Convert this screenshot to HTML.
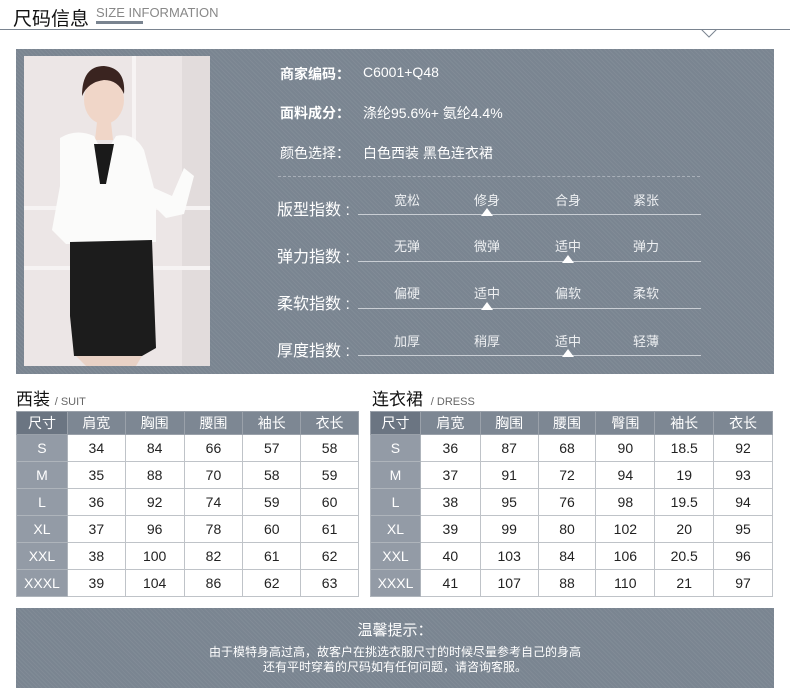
<!DOCTYPE html>
<html><head><meta charset="utf-8"><style>
*{margin:0;padding:0;box-sizing:border-box}
body{width:790px;height:693px;background:#fff;position:relative;overflow:hidden;font-family:"Liberation Sans","Noto Sans CJK SC",sans-serif;color:#222}
.a{position:absolute;white-space:nowrap}
.panel{background:#7a8591;background-image:repeating-linear-gradient(45deg,rgba(255,255,255,.05) 0 1px,transparent 1px 3px)}
.w{color:#fff}
.opt{position:absolute;font-size:13px;color:#eef0f2;transform:translateX(-50%)}
.ln{position:absolute;left:358px;width:343px;height:1px;background:#c9ced4}
.tri{position:absolute;width:0;height:0;border-left:6px solid transparent;border-right:6px solid transparent;border-bottom:8px solid #fff}
table{position:absolute;border-collapse:collapse;font-size:14px;text-align:center}
td{border:1px solid #bfc3c8;height:27px;padding:0;color:#222}
tr.h td{background:#7d8793;color:#fff;height:23px;border-color:#9aa1aa}
td.s{background:#939ba6;color:#fff;border-color:#aeb4bb}
tr.h td.s{background:#6b7582}
</style></head><body>
<div class="a" style="left:13px;top:4px;font-size:19px;color:#111">尺码信息</div>
<div class="a" style="left:96px;top:5px;font-size:13px;color:#888">SIZE INFORMATION</div>
<div class="a" style="left:96px;top:21px;width:47px;height:3px;background:#7a8490"></div>
<div class="a" style="left:0;top:29px;width:790px;height:1px;background:#7a8490"></div>
<svg class="a" style="left:700px;top:29px" width="18" height="10"><path d="M1 0 L9 8 L17 0" fill="none" stroke="#7a8490"/></svg>

<div class="a panel" style="left:16px;top:49px;width:758px;height:325px"></div>
<svg class="a" style="left:24px;top:56px" width="186" height="310" viewBox="0 0 186 310">
<rect width="186" height="310" fill="#ece6e6"/>
<rect x="108" y="0" width="4" height="310" fill="#f7f4f4"/>
<rect x="158" y="0" width="28" height="310" fill="#e2dcdc"/>
<rect x="0" y="150" width="186" height="4" fill="#f6f3f3"/>
<rect x="0" y="210" width="186" height="4" fill="#f6f3f3"/>
<ellipse cx="80" cy="44" rx="20" ry="24" fill="#f0d6c8"/>
<path d="M58 40 Q58 10 80 10 Q102 12 100 38 Q94 24 80 24 Q64 26 58 40Z" fill="#3a2420"/>
<path d="M73 66 L87 66 L89 84 L71 84Z" fill="#f0d6c8"/>
<path d="M36 82 Q52 72 70 80 L80 100 L92 80 Q110 76 120 94 L130 132 L148 140 L160 112 L170 120 L160 158 L142 162 L132 152 L132 186 L42 188 L28 174 L36 130 Z" fill="#fbfbfa"/>
<path d="M70 88 L90 88 L82 128 L76 128Z" fill="#1a1a1a"/>
<path d="M46 186 L128 184 L132 292 L118 300 L50 300 L46 260Z" fill="#1c1c1c"/>
<path d="M52 300 L62 310 L112 310 L118 300Z" fill="#e9d2c6"/>
</svg>

<div class="a w" style="left:280px;top:64px;font-size:14px;font-weight:bold">商家编码：</div>
<div class="a w" style="left:363px;top:64px;font-size:14px">C6001+Q48</div>
<div class="a w" style="left:280px;top:103px;font-size:14px;font-weight:bold">面料成分：</div>
<div class="a w" style="left:363px;top:103px;font-size:14px">涤纶95.6%+ 氨纶4.4%</div>
<div class="a w" style="left:280px;top:143px;font-size:14px">颜色选择：</div>
<div class="a w" style="left:363px;top:143px;font-size:14px">白色西装 黑色连衣裙</div>
<div class="a" style="left:278px;top:176px;width:422px;border-top:1px dashed #a8afb8"></div>

<div class="a w" style="left:277px;top:196px;font-size:16px">版型指数 :</div>
<div class="opt" style="left:407px;top:190px">宽松</div><div class="opt" style="left:487px;top:190px">修身</div><div class="opt" style="left:568px;top:190px">合身</div><div class="opt" style="left:646px;top:190px">紧张</div>
<div class="ln" style="top:214px"></div><div class="tri" style="left:481px;top:208px"></div>

<div class="a w" style="left:277px;top:243px;font-size:16px">弹力指数 :</div>
<div class="opt" style="left:407px;top:236px">无弹</div><div class="opt" style="left:487px;top:236px">微弹</div><div class="opt" style="left:568px;top:236px">适中</div><div class="opt" style="left:646px;top:236px">弹力</div>
<div class="ln" style="top:261px"></div><div class="tri" style="left:562px;top:255px"></div>

<div class="a w" style="left:277px;top:290px;font-size:16px">柔软指数 :</div>
<div class="opt" style="left:407px;top:283px">偏硬</div><div class="opt" style="left:487px;top:283px">适中</div><div class="opt" style="left:568px;top:283px">偏软</div><div class="opt" style="left:646px;top:283px">柔软</div>
<div class="ln" style="top:308px"></div><div class="tri" style="left:481px;top:302px"></div>

<div class="a w" style="left:277px;top:337px;font-size:16px">厚度指数 :</div>
<div class="opt" style="left:407px;top:331px">加厚</div><div class="opt" style="left:487px;top:331px">稍厚</div><div class="opt" style="left:568px;top:331px">适中</div><div class="opt" style="left:646px;top:331px">轻薄</div>
<div class="ln" style="top:355px"></div><div class="tri" style="left:562px;top:349px"></div>

<div class="a" style="left:16px;top:385px;font-size:17px;color:#111">西装 <span style="font-size:11px;color:#666">/ SUIT</span></div>
<div class="a" style="left:372px;top:385px;font-size:17px;color:#111">连衣裙 <span style="font-size:11px;color:#666">&nbsp;/ DRESS</span></div>

<table style="left:16px;top:411px;width:343px">
<colgroup><col style="width:51px"><col style="width:58px"><col style="width:59px"><col style="width:59px"><col style="width:58px"><col style="width:58px"></colgroup>
<tr class="h"><td class="s">尺寸</td><td>肩宽</td><td>胸围</td><td>腰围</td><td>袖长</td><td>衣长</td></tr>
<tr><td class="s">S</td><td>34</td><td>84</td><td>66</td><td>57</td><td>58</td></tr>
<tr><td class="s">M</td><td>35</td><td>88</td><td>70</td><td>58</td><td>59</td></tr>
<tr><td class="s">L</td><td>36</td><td>92</td><td>74</td><td>59</td><td>60</td></tr>
<tr><td class="s">XL</td><td>37</td><td>96</td><td>78</td><td>60</td><td>61</td></tr>
<tr><td class="s">XXL</td><td>38</td><td>100</td><td>82</td><td>61</td><td>62</td></tr>
<tr><td class="s">XXXL</td><td>39</td><td>104</td><td>86</td><td>62</td><td>63</td></tr>
</table>

<table style="left:370px;top:411px;width:403px">
<colgroup><col style="width:50px"><col style="width:60px"><col style="width:58px"><col style="width:58px"><col style="width:59px"><col style="width:59px"><col style="width:59px"></colgroup>
<tr class="h"><td class="s">尺寸</td><td>肩宽</td><td>胸围</td><td>腰围</td><td>臀围</td><td>袖长</td><td>衣长</td></tr>
<tr><td class="s">S</td><td>36</td><td>87</td><td>68</td><td>90</td><td>18.5</td><td>92</td></tr>
<tr><td class="s">M</td><td>37</td><td>91</td><td>72</td><td>94</td><td>19</td><td>93</td></tr>
<tr><td class="s">L</td><td>38</td><td>95</td><td>76</td><td>98</td><td>19.5</td><td>94</td></tr>
<tr><td class="s">XL</td><td>39</td><td>99</td><td>80</td><td>102</td><td>20</td><td>95</td></tr>
<tr><td class="s">XXL</td><td>40</td><td>103</td><td>84</td><td>106</td><td>20.5</td><td>96</td></tr>
<tr><td class="s">XXXL</td><td>41</td><td>107</td><td>88</td><td>110</td><td>21</td><td>97</td></tr>
</table>

<div class="a panel" style="left:16px;top:608px;width:758px;height:80px"></div>
<div class="a w" style="left:0;width:790px;text-align:center;top:619px;font-size:15px">温馨提示：</div>
<div class="a w" style="left:0;width:790px;text-align:center;top:645px;font-size:12px;line-height:15px">由于模特身高过高，故客户在挑选衣服尺寸的时候尽量参考自己的身高<br>还有平时穿着的尺码如有任何问题，请咨询客服。</div>
</body></html>
